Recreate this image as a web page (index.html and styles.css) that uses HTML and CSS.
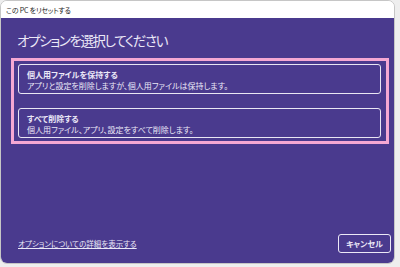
FILE: index.html
```html
<!DOCTYPE html>
<html lang="ja">
<head>
<meta charset="utf-8">
<link rel="stylesheet" href="styles.css">
</head>
<body>
<div class="window">
  <div class="titlebar">この PC をリセットする</div>
  <div class="content">
    <h1 class="heading">オプションを選択してください</h1>
    <div class="options">
      <div class="option">
        <div class="opt-title">個人用ファイルを保持する</div>
        <div class="opt-desc">アプリと設定を削除しますが、個人用ファイルは保持します。</div>
      </div>
      <div class="option">
        <div class="opt-title">すべて削除する</div>
        <div class="opt-desc">個人用ファイル、アプリ、設定をすべて削除します。</div>
      </div>
    </div>
    <div class="spacer"></div>
    <div class="footer">
      <a class="link" href="#">オプションについての詳細を表示する</a>
      <button class="cancel">キャンセル</button>
    </div>
  </div>
</div>
</body>
</html>
```

FILE: styles.css
```css
html, body {
  margin: 0;
  padding: 0;
}
body {
  width: 400px;
  height: 267px;
  background: #eeeeee;
  font-family: "Noto Sans CJK JP", "Noto Sans", sans-serif;
  font-feature-settings: "palt";
  overflow: hidden;
}
.window {
  width: 395px;
  height: 264px;
  box-sizing: border-box;
  border: 1px solid #c6c6c6;
  border-radius: 7px;
  overflow: hidden;
  display: flex;
  flex-direction: column;
  background: #ffffff;
}
.titlebar {
  height: 17px;
  flex: none;
  display: flex;
  align-items: center;
  padding-left: 5px;
  font-size: 7px;
  letter-spacing: -0.2px;
  color: #1e1e1e;
  background: #ffffff;
}
.content {
  flex: 1;
  background: #4a3a8e;
  display: flex;
  flex-direction: column;
  padding: 12px 3px 10px 16px;
  color: #ebe8f7;
}
.heading {
  margin: 0 0 8px 0;
  font-size: 13.5px;
  font-weight: 400;
  letter-spacing: -1.4px;
  line-height: 20px;
  height: 20px;
}
.options {
  margin-left: -6px;
  width: 378px;
  box-sizing: border-box;
  border: 3px solid #f5a8d3;
  padding: 3px 5px 3px 4px;
  display: flex;
  flex-direction: column;
  gap: 14px;
}
.option {
  height: 30px;
  box-sizing: border-box;
  border: 1px solid #e9e6f3;
  border-radius: 3px;
  padding: 2px 8px 0 8px;
  display: flex;
  flex-direction: column;
  justify-content: center;
}
.opt-title {
  font-size: 8px;
  font-weight: 700;
  line-height: 11px;
}
.opt-desc {
  font-size: 8px;
  line-height: 11px;
}
.spacer {
  flex: 1;
}
.footer {
  display: flex;
  align-items: center;
  justify-content: space-between;
}
.link {
  margin-left: 1px;
  font-size: 7.5px;
  color: #ebe8f7;
  text-decoration: underline;
  text-underline-offset: 1px;
}
.cancel {
  width: 53px;
  height: 19px;
  box-sizing: border-box;
  border: 1.5px solid #ece9f6;
  border-radius: 3px;
  background: #4a3a8e;
  color: #ebe8f7;
  font-family: inherit;
  font-feature-settings: "palt";
  font-size: 8px;
  font-weight: 700;
  padding: 0;
}
```
